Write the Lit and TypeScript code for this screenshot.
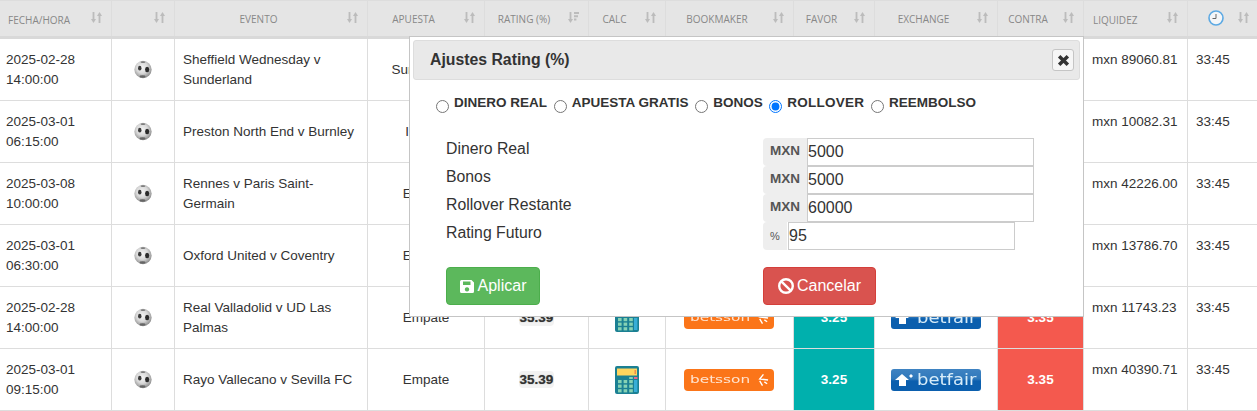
import { LitElement, html, css, svg } from "lit";
import { customElement } from "lit/decorators.js";

const sortIcon = html`<svg class="sort" width="11" height="11" viewBox="0 0 11 11"><path d="M1.600 0h1.800v7H5L2.500 11 0 7h1.600zM8.500 0 11 4H9.400v7H7.600V4H6z" fill="#bcbcbc"/></svg>`;
const sortActive = html`<svg class="sort" width="11" height="11" viewBox="0 0 11 11"><path d="M1.600 0h1.800v7H5L2.500 11 0 7h1.600zM6 0h5v2H6zM6 3.200h4v2H6zM6 6.400h2.400v2H6z" fill="#bcbcbc"/></svg>`;
const clock = html`<svg class="clock" width="16" height="16" viewBox="0 0 16 16"><circle cx="8" cy="8" r="7" fill="#f4f6f8" stroke="#5ca9e3" stroke-width="1.600"/><path d="M8 4V8.500H4.500" fill="none" stroke="#666" stroke-width="1"/></svg>`;
const ball = svg`<svg width="18" height="19" viewBox="0 0 20 20"><defs><radialGradient id="b" cx="45%" cy="40%" r="65%"><stop offset="0" stop-color="#f5f5f5"/><stop offset=".5" stop-color="#d8d8d8"/><stop offset="1" stop-color="#808080"/></radialGradient><filter id="s" x="-30%" y="-30%" width="160%" height="160%"><feGaussianBlur stdDeviation=".8"/></filter></defs><circle cx="10" cy="10" r="9.600" fill="url(#b)"/><g filter="url(#s)"><ellipse cx="6.400" cy="8.500" rx="1.900" ry="2.700" fill="#3a3a3a"/><ellipse cx="14.600" cy="10" rx="2.300" ry="3" fill="#2a2a2a"/><ellipse cx="10" cy="1.800" rx="2.800" ry="1.100" fill="#777"/><ellipse cx="9.500" cy="17.800" rx="3.400" ry="1.300" fill="#666"/></g></svg>`;
const calcKeys = [0, 1, 2].flatMap((r) =>
  [0, 1, 2].map((c) => svg`<rect x="${3 + c * 5.6}" y="${14 + r * 4.6}" width="3.6" height="3.2" fill="#86d2b4"/>`),
);
const calc = html`<svg width="24" height="28" viewBox="0 0 24 28"><rect width="24" height="28" rx="2" fill="#1b8093"/><rect x="2" y="2.500" width="20" height="7" fill="#ffd55e"/><path d="M19.500 4h1.500v4h-1.500z" fill="#ef8a4a"/><rect x="14.200" y="11" width="3.600" height="2" fill="#86d2b4"/><rect x="19" y="11" width="3.400" height="2" fill="#e8688a"/><rect x="19" y="14" width="3.400" height="12" fill="#38aed6"/>${calcKeys}</svg>`;
const save = html`<svg width="15" height="15" viewBox="0 0 15 15"><path fill-rule="evenodd" d="M1.500 1h10L14 3.500v9a1.500 1.500 0 0 1-1.500 1.500h-11A1.500 1.500 0 0 1 0 12.500v-10A1.500 1.500 0 0 1 1.500 1zM3 2.500v3.500h7.500V2.500zM7 8.200a2.200 2.200 0 1 0 .01 0z" fill="#fff"/></svg>`;
const ban = html`<svg width="16" height="16" viewBox="0 0 16 16"><circle cx="8" cy="8" r="6.800" fill="none" stroke="#fff" stroke-width="2.400"/><path d="M3.300 3.300l9.400 9.400" stroke="#fff" stroke-width="2.400"/></svg>`;
const times = html`<svg width="13" height="13" viewBox="0 0 12 12"><path d="M2 2l8 8M10 2l-8 8" stroke="#333" stroke-width="3.200"/></svg>`;

const rows = [
  ["2025-02-28", "14:00:00", "Sheffield Wednesday v Sunderland", "Sunderland", "mxn 89060.81"],
  ["2025-03-01", "06:15:00", "Preston North End v Burnley", "Irlanda", "mxn 10082.31"],
  ["2025-03-08", "10:00:00", "Rennes v Paris Saint-Germain", "Empate", "mxn 42226.00"],
  ["2025-03-01", "06:30:00", "Oxford United v Coventry", "Empate", "mxn 13786.70"],
  ["2025-02-28", "14:00:00", "Real Valladolid v UD Las Palmas", "Empate", "mxn 11743.23"],
  ["2025-03-01", "09:15:00", "Rayo Vallecano v Sevilla FC", "Empate", "mxn 40390.71"],
];
const heads = ["", "EVENTO", "APUESTA", "RATING (%)", "CALC", "BOOKMAKER", "FAVOR", "EXCHANGE", "CONTRA"];
const radios = ["DINERO REAL", "APUESTA GRATIS", "BONOS", "ROLLOVER", "REEMBOLSO"];
const fields = [
  ["Dinero Real", "MXN", "5000"],
  ["Bonos", "MXN", "5000"],
  ["Rollover Restante", "MXN", "60000"],
  ["Rating Futuro", "%", "95"],
];

@customElement("app-root")
export class AppRoot extends LitElement {
  static styles = css`
    :host { display: block; position: relative; width: 1257px; height: 411px; overflow: hidden; background: #fff;
      font-family: "Liberation Sans", Arial, sans-serif; font-size: 13.500px; color: #333; }
    .row { display: grid; grid-template-columns: 112px 63px 193px 117px 104px 77px 128px 81px 123px 86px 104px 69px; }
    .head { height: 39px; background: #e5e5e5; border-top: 1px solid #ddd; border-bottom: 3px solid #d9d9d9; box-sizing: border-box; }
    .th { position: relative; display: flex; align-items: center; justify-content: center; padding-right: 25px; border-right: 1px solid #ddd;
      font-family: "Open Sans", sans-serif; font-size: 10px; color: #888; box-sizing: border-box; }
    .th.left { justify-content: flex-start; padding-left: 8px; padding-top: 2px; }
    .th.liq { padding-left: 9px; }
    .th:last-child { border-right: 0; }
    .sort { position: absolute; right: 9px; top: 11px; }
    .th:last-child .sort { right: 8px; }
    .clock { display: block; margin: -2px 0 0 11px; }
    .body { height: 62px; border-bottom: 1px solid #ddd; box-sizing: border-box; }
    .td { display: flex; align-items: center; justify-content: center; border-right: 1px solid #ddd; line-height: 20px; box-sizing: border-box; min-width: 0; }
    .td:last-child { border-right: 0; }
    .date, .event { justify-content: flex-start; }
    .date { padding-left: 6px; }
    .event { padding: 0 12px 0 8px; }
    .top { justify-content: flex-start; align-items: flex-start; padding: 11px 0 0 8px; }
    .rating { font-weight: bold; }
    .rating span { background: #f2f2f2; border-radius: 4px; line-height: 17px; padding: 0 1px; text-shadow: 0 0 1px #777; }
    .fav, .con { color: #fff; font-weight: bold; }
    .fav { background: #00b0ad; }
    .con { background: #f4594e; }
    .logo { width: 90px; height: 22px; border-radius: 3px; display: flex; align-items: center; justify-content: center; overflow: hidden; }
    .betsson { background: #fb7519; font: 10px/22px "DejaVu Sans", sans-serif; color: #ffe4d0; gap: 5px; margin-right: 1px; border-radius: 4px; }
    .betsson span { display: inline-block; width: 61px; transform: scaleX(1.530); transform-origin: left center; }
    .betfair { background: linear-gradient(#3f83c2 0, #2f78bb 45%, #0b5fae 55%, #0b5fae 100%); font: 15px/22px "DejaVu Sans", sans-serif; color: #d7ecf9; gap: 2px; }
    .betfair span { display: inline-block; width: 60px; transform: scaleX(1.200); transform-origin: left center; }
    .modal { position: absolute; left: 409px; top: 36px; width: 675px; height: 281px; box-sizing: border-box; background: #fff; border: 1px solid #c5c5c5; padding: 3px; }
    .bar { height: 40px; box-sizing: border-box; display: flex; align-items: center; justify-content: space-between; background: #e9e9e9; border: 1px solid #ddd; border-radius: 3px; padding: 0 5px 0 16px; }
    .title { font-size: 15.800px; font-weight: bold; }
    .close { width: 22px; height: 22px; box-sizing: border-box; background: #f6f6f6; border: 1px solid #c5c5c5; border-radius: 3px; padding: 0; display: flex; align-items: center; justify-content: center; }
    .radios { display: flex; margin: 15px 0 0 23px; font-size: 13.500px; font-weight: bold; gap: 6.700px; }
    .radios label { display: flex; gap: 5px; align-items: flex-start; }
    .radios label:nth-child(4) span { letter-spacing: .25px; }
    .radios input { margin: 5px 0 0; width: 13px; height: 13px; }
    .radios span { line-height: 16px; }
    .form { display: grid; grid-template-columns: 317px 1fr; grid-auto-rows: 28px; margin: 25px 0 0 33px; }
    .lab { font-size: 15.800px; line-height: 20px; padding-top: 1px; }
    .group { display: flex; height: 28px; }
    .addon { width: 44px; box-sizing: border-box; background: #eee; border-radius: 4px 0 0 4px; font-size: 13.500px; font-weight: bold; color: #555; display: flex; align-items: center; justify-content: center; padding-bottom: 3px; }
    .addon.pct { width: 24px; margin-right: 1px; font-size: 11px; font-weight: normal; padding: 0; }
    .group input { width: 227px; height: 28px; box-sizing: border-box; border: 1px solid #ccc; padding: 0; margin: 0; font: 16px "Liberation Sans", Arial, sans-serif; color: #333; background: #fff; outline: 0; }
    .actions { display: grid; grid-template-columns: 317px 1fr; margin: 17px 0 0 33px; }
    .btn { height: 38px; box-sizing: border-box; border-radius: 4px; border: 1px solid; color: #fff; font: 16px "Liberation Sans", Arial, sans-serif; display: flex; align-items: center; justify-content: center; gap: 3px; padding: 0; }
    .ok { width: 94px; background: #5cb85c; border-color: #4cae4c; }
    .no { width: 113px; background: #d9534f; border-color: #d43f3a; }
  `;

  render() {
    return html`
      <div class="row head">
        <div class="th left">FECHA/HORA${sortIcon}</div>
        ${heads.map((h, i) => html`<div class="th">${h}${i === 3 ? sortActive : sortIcon}</div>`)}
        <div class="th left liq">LIQUIDEZ${sortIcon}</div>
        <div class="th">${clock}${sortIcon}</div>
      </div>
      ${rows.map(
        (r) => html`<div class="row body">
          <div class="td date"><div>${r[0]}<br />${r[1]}</div></div>
          <div class="td">${ball}</div>
          <div class="td event">${r[2]}</div>
          <div class="td">${r[3]}</div>
          <div class="td rating"><span>35.39</span></div>
          <div class="td">${calc}</div>
          <div class="td"><div class="logo betsson"><span>betsson</span><svg width="13" height="14" viewBox="0 0 14 14"><path d="M8 1 4 6l9 1M4 8l3 5M9 9l3 2" fill="none" stroke="#fff" stroke-width="1.500"/></svg></div></div>
          <div class="td fav">3.25</div>
          <div class="td"><div class="logo betfair"><svg width="20" height="12" viewBox="0 0 20 12"><path d="M0 6 7 0l7 6h-3v6H4V6zM14 2l2-2 2 2-2 2z" fill="#fff"/></svg><span>betfair</span></div></div>
          <div class="td con">3.35</div>
          <div class="td top">${r[4]}</div>
          <div class="td top">33:45</div>
        </div>`,
      )}
      <div class="modal">
        <div class="bar">
          <span class="title">Ajustes Rating (%)</span>
          <button class="close">${times}</button>
        </div>
        <div class="radios">
          ${radios.map((t) => html`<label><input type="radio" name="k" ?checked=${t === "ROLLOVER"} /><span>${t}</span></label>`)}
        </div>
        <div class="form">
          ${fields.map(
            (f) => html`<div class="lab">${f[0]}</div>
              <div class="group"><span class="addon ${f[1] === "%" ? "pct" : ""}">${f[1]}</span><input .value=${f[2]} /></div>`,
          )}
        </div>
        <div class="actions">
          <button class="btn ok">${save}Aplicar</button>
          <button class="btn no">${ban}Cancelar</button>
        </div>
      </div>
    `;
  }
}
